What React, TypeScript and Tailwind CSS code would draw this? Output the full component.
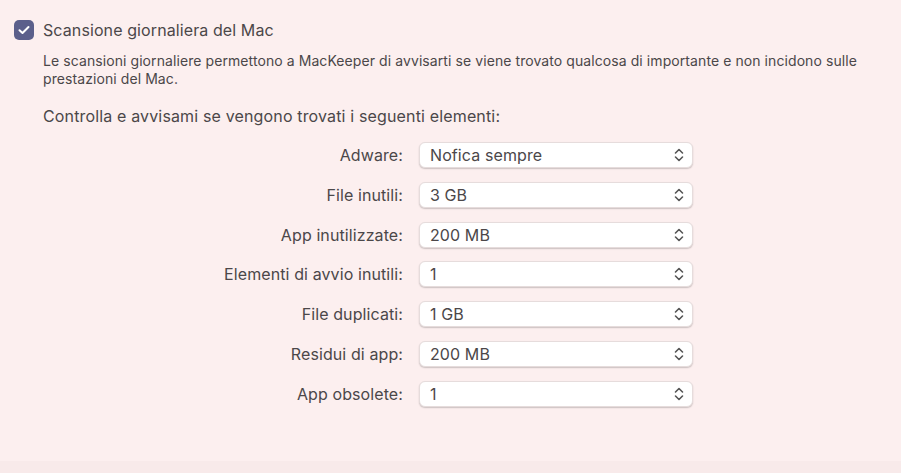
import React from "react";

const rows: [string, string][] = [
  ["Adware:", "Nofica sempre"],
  ["File inutili:", "3 GB"],
  ["App inutilizzate:", "200 MB"],
  ["Elementi di avvio inutili:", "1"],
  ["File duplicati:", "1 GB"],
  ["Residui di app:", "200 MB"],
  ["App obsolete:", "1"],
];

function Chevrons() {
  return (
    <svg width="10" height="14" viewBox="0 0 10 14" fill="none" stroke="#555" strokeWidth="1.6" strokeLinecap="round" strokeLinejoin="round">
      <path d="M1.5 5 L5 1.5 L8.5 5" />
      <path d="M1.5 9 L5 12.5 L8.5 9" />
    </svg>
  );
}

export default function App() {
  return (
    <div
      className="flex h-[473px] w-[901px] flex-col bg-[#fcefef] text-[#4b4749]"
      style={{ fontFamily: "Inter, 'Liberation Sans', sans-serif" }}
    >
      <div className="flex-1 px-[14px] pt-[19px]">
        <div className="flex items-center gap-[9px]">
          <div className="flex h-[20px] w-[20px] items-center justify-center rounded-[5px] bg-[#5b5f8b]">
            <svg width="12" height="10" viewBox="0 0 12 10" fill="none" stroke="white" strokeWidth="2" strokeLinecap="round" strokeLinejoin="round">
              <path d="M1.5 5.2 L4.5 8 L10.5 2" />
            </svg>
          </div>
          <span className="text-[16px] leading-[22px] tracking-[0.1px]">Scansione giornaliera del Mac</span>
        </div>

        <p className="ml-[29px] mt-[11px] w-[840px] text-[14px] leading-[18px] tracking-[0.08px]">
          Le scansioni giornaliere permettono a MacKeeper di avvisarti se viene trovato qualcosa di importante e non
          incidono sulle prestazioni del Mac.
        </p>

        <p className="ml-[29px] mt-[18px] text-[16px] leading-[20px] tracking-[0.15px]">
          Controlla e avvisami se vengono trovati i seguenti elementi:
        </p>

        <div className="mt-[16px] flex flex-col gap-[13.8px]">
          {rows.map(([label, value]) => (
            <div key={label} className="flex items-center">
              <span className="w-[405px] pr-[16px] text-right text-[16px] tracking-[0.1px]">{label}</span>
              <div className="flex h-[26px] w-[274px] items-center justify-between rounded-[6px] border border-[#e6dcdc] bg-white pl-[10px] pr-[8px] shadow-[0_1px_1.5px_rgba(0,0,0,0.2)]">
                <span className="text-[16px] tracking-[0.1px]">{value}</span>
                <Chevrons />
              </div>
            </div>
          ))}
        </div>
      </div>
      <div className="h-[12px] bg-[#f8eaea]" />
    </div>
  );
}
